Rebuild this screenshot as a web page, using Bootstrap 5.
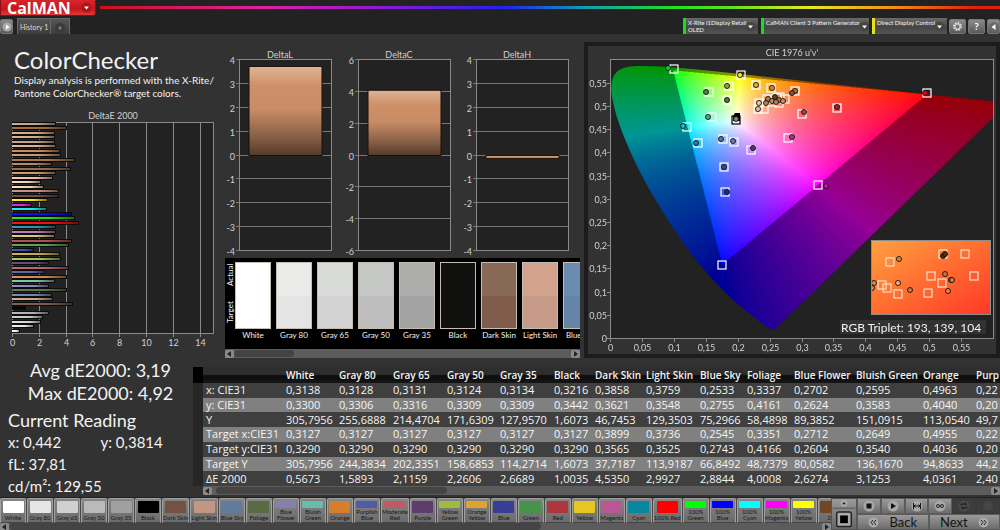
<!DOCTYPE html>
<html lang="en">
<head>
<meta charset="utf-8">
<meta name="viewport" content="width=device-width, initial-scale=1">
<title>CalMAN – ColorChecker</title>
<link rel="stylesheet" href="https://cdn.jsdelivr.net/npm/bootstrap@5.3.0/dist/css/bootstrap.min.css">
<style>
  body { background:#323232; color:#f2f2f2; font-family:Lato,"Open Sans",sans-serif; font-size:10px; line-height:13px; overflow-x:hidden; }
  button { font-family:inherit; }
  .topbar { background:#222; height:17px; }
  .brand-btn { width:96px; height:16px; border:1px solid #8d0d10; border-top:0; border-radius:0 0 3px 0; background:linear-gradient(#d6252b,#c9151c 60%,#e03a3a); color:#fff; font:700 16px/16px "Open Sans",sans-serif; padding:0 3px 0 6px; }
  .rainbow { height:3px; margin-top:6px; background:linear-gradient(90deg,#d0101c 0%,#e020a0 18%,#8a18d8 32%,#2222ee 45%,#10a0b0 54%,#20e020 64%,#60e020 70%,#e8e820 79%,#f09018 88%,#e02010 97%); }
  .tabbar { background:#222; height:17px; }
  .hist-tab { background:linear-gradient(#555,#3d3d3d); border:1px solid #686868; border-bottom:0; color:#ddd; font-size:7px; line-height:14px; padding:0 2px; height:16px; }
  .sq-btn { width:17px; height:15px; padding:0; border:1px solid #777; border-radius:2px; background:linear-gradient(#8b8b8b,#5a5a5a); display:flex; align-items:center; justify-content:center; }
  .sq-btn.narrow { width:13px; }
  .devices { gap:3px; }
  .device { height:16px; padding:0 4px 0 2px; border:0; border-left:3px solid; background:linear-gradient(#6a6a6a,#454545 55%,#555); color:#f2f2f2; font-size:6px; line-height:7px; text-align:left; white-space:nowrap; display:flex; align-items:center; justify-content:space-between; }
  .device span { align-self:start; padding-top:1px; }
  .device svg { flex:none; }
  .dev-green { border-color:#18e018; } .dev-yellow { border-color:#e8e018; }
  .w-dev1 { width:75px; } .w-dev2 { width:108px; } .w-dev3 { width:75px; }
  .tools { gap:2px; margin-left:2px; }
  .upper { display:grid; grid-template-columns:225fr 359fr 416fr; }
  .upper > * { min-width:0; }
  .intro { padding:12px 0 10px 14px; white-space:nowrap; }
  h1 { font-size:24px; line-height:28px; font-weight:400; margin:0; }
  .tick { font:9px Lato,sans-serif; fill:#d0d0d0; }
  svg.fill { display:block; width:100%; height:auto; }
  .mid { padding-right:4px; }
  .strip { background:#000; height:91px; overflow:hidden; }
  .side-lbl { width:10px; writing-mode:vertical-rl; transform:rotate(180deg); font-size:8px; line-height:10px; padding:26px 0 6px; }
  .pairs { gap:5px; }
  .pair { flex:0 0 36px; text-align:center; font-size:8px; line-height:12px; white-space:nowrap; }
  .chip { height:67px; border:1px solid #c4bdb4; }
  .chip div { height:50%; }
  .scroller { height:9px; background:#5c5c5c; display:flex; align-items:center; justify-content:space-between; }
  .scroller.slim { height:7px; }
  .scroller.inset { margin-left:10px; }
  .thumb { height:7px; border-radius:4px; background:#444; margin-right:auto; }
  .arrow { width:9px; height:8px; padding:0; border:0; border-radius:2px; background:#8a8a8a; display:flex; align-items:center; justify-content:center; }
  .cie { border:4px solid #1c1c1c; margin-top:8px; background:#323232; }
  .cie canvas { position:absolute; inset:0; width:100%; height:100%; }
  .lower { display:grid; grid-template-columns:193px minmax(0,1fr); min-height:139px; }
  .big { font-size:18px; line-height:23px; padding-top:1px; }
  .cur { font-size:18px; line-height:30px; }
  .val { font-size:15px; line-height:14px; }
  .val .w-50 { max-width:94px; }
  .grid-wrap { margin-top:9px; overflow:hidden; }
  table.meas { table-layout:fixed; width:832px; height:119px; font:11px/14px "Open Sans",sans-serif; color:#f4f4f4; border-collapse:collapse; }
  .meas th, .meas td { padding:0 0 0 3px; white-space:nowrap; overflow:hidden; font-weight:400; }
  .meas thead th { font-size:10px; font-weight:600; background:linear-gradient(#2e2e2e 0 45%,#0c0c0c 55%,#161616); height:16px; }
  .meas tbody tr:nth-child(odd) { background:#3f3f3f; }
  .meas tbody tr:nth-child(even) { background:#808080; }
  .meas tbody td:first-child { background:#262626; }
  .meas thead th:first-child { background:#000; }
  .bottom { background:#484848; height:33px; border-top:1px solid #222; }
  .patches { overflow:hidden; height:25px; gap:1px; }
  .patch { flex:0 0 26px; height:25px; padding:2px 0 0; border:1px solid #a0a0a0; border-bottom-color:#444; border-radius:2px 2px 0 0; background:linear-gradient(#858585,#6b6b6b); color:#161616; font-size:6px; line-height:6px; white-space:nowrap; display:flex; flex-direction:column; align-items:center; }
  .patch i { width:21px; flex:0 0 12px; border-radius:1px; margin-bottom:2px; }
  .patch.two i { flex-basis:7px; margin-bottom:1px; }
  .stopcol { flex:0 0 25px; background:linear-gradient(#999,#666); border:1px solid #555; }
  .ctl { flex:0 0 143px; }
  .ctl button { border:1px solid #5c5c5c; border-radius:0; background:linear-gradient(#9a9a9a,#6c6c6c); padding:0; color:#151515; display:flex; align-items:center; justify-content:center; flex:1 1 0; }
  .ctl button:disabled { background:#3c3c3c; border-color:#3a3a3a; }
  .modes, .steps { height:16px; }
  .steps button { font-size:13px; line-height:14px; gap:10px; }
</style>
</head>
<body>
<header>
  <div class="topbar d-flex align-items-start">
    <button class="brand-btn d-flex align-items-center justify-content-between" type="button">CalMAN
      <svg width="11" height="11" viewBox="0 0 11 11"><circle cx="5.5" cy="5.5" r="5" fill="#b01218"/><path d="M3 4.5h5L5.5 7.5z" fill="#fff"/></svg></button>
    <div class="rainbow flex-grow-1 ms-1"></div>
  </div>
  <div class="tabbar d-flex align-items-end">
    <button class="sq-btn narrow" type="button" aria-label="Show panel"><svg width="10" height="10" viewBox="0 0 10 10"><circle cx="5" cy="5" r="4.5" fill="#aaa"/><path d="M4 2.5v5L7.5 5z" fill="#fff"/></svg></button>
    <button class="hist-tab flex-shrink-0 ms-1" type="button">History 1</button>
    <button class="hist-tab border-start-0 px-1" type="button" aria-label="New tab"><svg width="10" height="10" viewBox="0 0 10 10"><circle cx="5" cy="5" r="5" fill="#3a3a3a"/><path d="M5 3v4M3 5h4" stroke="#888"/></svg></button>
    <div class="d-flex ms-auto align-items-end devices">
      <button class="device dev-green w-dev1" type="button"><span>X-Rite i1Display Retail<br>OLED</span><svg width="9" height="9" viewBox="0 0 9 9"><circle cx="4.5" cy="4.5" r="4.5" fill="#444"/><path d="M2 3.5h5L4.5 6.5z" fill="#fff"/></svg></button>
      <button class="device dev-green w-dev2" type="button"><span>CalMAN Client 3 Pattern Generator</span><svg width="9" height="9" viewBox="0 0 9 9"><circle cx="4.5" cy="4.5" r="4.5" fill="#444"/><path d="M2 3.5h5L4.5 6.5z" fill="#fff"/></svg></button>
      <button class="device dev-yellow w-dev3" type="button"><span>Direct Display Control</span><svg width="9" height="9" viewBox="0 0 9 9"><circle cx="4.5" cy="4.5" r="4.5" fill="#444"/><path d="M2 3.5h5L4.5 6.5z" fill="#fff"/></svg></button>
    </div>
    <div class="d-flex tools">
      <button class="sq-btn" type="button" aria-label="Settings"><svg width="11" height="11" viewBox="0 0 11 11"><circle cx="5.5" cy="5.5" r="3.5" fill="none" stroke="#ddd" stroke-width="2" stroke-dasharray="1.7 1"/><circle cx="5.5" cy="5.5" r="2.5" fill="none" stroke="#ddd"/></svg></button>
      <button class="sq-btn text-white fw-bold" type="button" aria-label="Help">?</button>
      <button class="sq-btn narrow" type="button" aria-label="Collapse"><svg width="10" height="10" viewBox="0 0 10 10"><circle cx="5" cy="5" r="4.5" fill="#666"/><path d="M6.5 2v6L2.5 5z" fill="#fff"/></svg></button>
    </div>
  </div>
</header>

<main>
  <div class="upper">
    <section>
      <div class="intro">
        <h1>ColorChecker</h1>
        <p class="mb-0">Display analysis is performed with the X-Rite/<br>Pantone ColorChecker® target colors.</p>
      </div>
      <svg class="fill" id="deltaE" viewBox="0 0 225 238" role="img" aria-label="DeltaE 2000"></svg>
    </section>
    <section class="mid">
      <svg class="fill" id="deltas" viewBox="0 0 355 224" role="img" aria-label="DeltaL, DeltaC, DeltaH"></svg>
      <div class="strip d-flex">
        <div class="side-lbl d-flex justify-content-between flex-shrink-0"><span>Target</span><span>Actual</span></div>
        <div class="d-flex pt-1 overflow-hidden pairs" id="pairs"></div>
      </div>
      <div class="scroller"><button class="arrow" type="button" aria-label="Scroll left"><svg width="5" height="6"><path d="M4 0v6L0 3z" fill="#222"/></svg></button><div class="thumb" style="width:17%"></div><button class="arrow" type="button" aria-label="Scroll right"><svg width="5" height="6"><path d="M1 0v6L5 3z" fill="#222"/></svg></button></div>
    </section>
    <section>
      <div class="cie"><div class="position-relative">
        <canvas id="gamut" width="816" height="616"></canvas>
        <svg class="fill position-relative" id="cie" viewBox="0 0 408 308" role="img" aria-label="CIE 1976 u'v'"></svg>
      </div></div>
    </section>
  </div>

  <div class="lower">
    <section class="ps-2">
      <div class="big text-center">Avg dE2000: 3,19<br>Max dE2000: 4,92</div>
      <div class="cur">Current Reading</div>
      <div class="val d-flex"><span class="w-50">x: 0,442</span><span>y: 0,3814</span></div>
      <div class="val mt-2">fL: 37,81</div>
      <div class="val mt-1 pt-1">cd/m²: 129,55</div>
    </section>
    <section class="grid-wrap">
      <table class="meas" id="meas"></table>
      <div class="scroller inset"><button class="arrow" type="button" aria-label="Scroll left"><svg width="5" height="6"><path d="M4 0v6L0 3z" fill="#222"/></svg></button><div class="thumb ms-1" style="width:29%"></div><button class="arrow" type="button" aria-label="Scroll right"><svg width="5" height="6"><path d="M1 0v6L5 3z" fill="#222"/></svg></button></div>
    </section>
  </div>
</main>

<footer class="bottom d-flex">
  <div class="flex-grow-1 overflow-hidden">
    <div class="patches d-flex" id="patches"></div>
    <div class="scroller slim"><button class="arrow" type="button" aria-label="Scroll left"><svg width="5" height="6"><path d="M4 0v6L0 3z" fill="#222"/></svg></button><div class="thumb" style="width:64%"></div><button class="arrow" type="button" aria-label="Scroll right"><svg width="5" height="6"><path d="M1 0v6L5 3z" fill="#222"/></svg></button></div>
  </div>
  <div class="stopcol d-flex flex-column align-items-center">
    <svg width="24" height="31" viewBox="0 0 24 31"><path d="M0 9.5h24" stroke="#555"/><circle cx="12" cy="4.5" r="3.5" fill="#aaa"/><path d="M10 5.5h4L12 3z" fill="#222"/><rect x="4.5" y="13.5" width="15" height="15" rx="2" fill="#aaa" stroke="#222" stroke-width="1.5"/><rect x="8" y="17" width="8" height="8" fill="#000"/></svg>
  </div>
  <div class="ctl">
    <div class="modes d-flex">
      <button type="button" aria-label="Stop"><svg width="12" height="12" viewBox="0 0 12 12"><circle cx="6" cy="6" r="5.5" fill="#a8a8a8"/><rect x="3.5" y="3.5" width="5" height="5" fill="#111"/></svg></button>
      <button type="button" aria-label="Play"><svg width="12" height="12" viewBox="0 0 12 12"><circle cx="6" cy="6" r="5.5" fill="#a8a8a8"/><path d="M4 3v6L9 6z" fill="#111"/></svg></button>
      <button type="button" aria-label="Step"><svg width="12" height="12" viewBox="0 0 12 12"><circle cx="6" cy="6" r="5.5" fill="#a8a8a8"/><path d="M2.5 3v6M9.5 3v6M3 6h6M4.5 4.5L3 6l1.5 1.5M7.5 4.5L9 6 7.5 7.5" stroke="#111" fill="none"/></svg></button>
      <button type="button" aria-label="Loop"><svg width="12" height="12" viewBox="0 0 12 12"><circle cx="6" cy="6" r="5.5" fill="#a8a8a8"/><circle cx="4" cy="6" r="1.5" fill="none" stroke="#222"/><circle cx="8" cy="6" r="1.5" fill="none" stroke="#222"/></svg></button>
      <button type="button" disabled aria-label="Refresh"><svg width="12" height="12" viewBox="0 0 12 12"><circle cx="6" cy="6" r="5.5" fill="#4c4c4c"/><path d="M3 5.5V4h5M7 2.5L8.5 4 7 5.5M9 6.5V8H4M5 6.5L3.5 8 5 9.5" fill="none" stroke="#161616"/></svg></button>
      <button type="button" disabled aria-label="Record"><svg width="12" height="12" viewBox="0 0 12 12"><circle cx="6" cy="6" r="5" fill="#464646"/></svg></button>
    </div>
    <div class="steps d-flex">
      <button type="button"><svg width="11" height="11" viewBox="0 0 11 11"><circle cx="5.5" cy="5.5" r="5" fill="#aaa"/><path d="M5 3L3 5.5 5 8M8 3L6 5.5 8 8" fill="none" stroke="#222"/></svg>Back</button>
      <button type="button">Next<svg width="11" height="11" viewBox="0 0 11 11"><circle cx="5.5" cy="5.5" r="5" fill="#aaa"/><path d="M3 3l2 2.5L3 8M6 3l2 2.5L6 8" fill="none" stroke="#222"/></svg></button>
    </div>
  </div>
</footer>

<script src="https://cdn.jsdelivr.net/npm/bootstrap@5.3.0/dist/js/bootstrap.bundle.min.js"></script>
<script>
const $ = id => document.getElementById(id);
const txt = (x, y, s, a = 'middle') => `<text class="tick" x="${x}" y="${y}" text-anchor="${a}">${s}</text>`;
const line = (x1, y1, x2, y2, c = '#8a8a8a') => `<path d="M${x1} ${y1}L${x2} ${y2}" stroke="${c}"/>`;

/* DeltaE 2000: one bar per patch, top to bottom */
const dE = `3.2 d0aa8c,4 a07048,3.1 d8b088,3.1 d4b494,3.1 c8a888,3.2 e8b898,3.5 c89068,3.6 d89870,4.6 b07848,2.9 b09078,4.3 987050,3.2 d0a070,2.95 f8c8b0,2.1 f8d8c8,2.3 f8e0c0,3.4 c89880,3.4 785040,2.6 f8f020,1.45 e828e8,2.5 20f0f0,4.4 1010e8,4.6 20e820,4.9 ff1010,3.2 3898b0,3.2 c080b8,3.1 e0d078,4.4 b85058,4.2 60a858,1.55 4858b0,3.5 d0b058,3.6 b0c858,2.7 685078,4.15 c06878,2.4 5870b0,4.05 d89050,3.1 80c8b0,2.65 9090c8,4 687858,2.9 7090b8,3 d8a890,4.5 806058,1 080808,2.65 b8b8b8,2.25 d0d0d0,2.1 e0e0e0,1.6 f0f0f0,.55 ffffff`.split(',').map(r => r.split(' '));
let s = '<defs><linearGradient id="sh" x1="0" x2="1"><stop stop-color="#000" stop-opacity="0"/><stop offset=".6" stop-color="#000" stop-opacity=".05"/><stop offset="1" stop-color="#000" stop-opacity=".5"/></linearGradient></defs><rect x="12.5" y="12.5" width="201" height="211" fill="#222" stroke="#8a8a8a"/>' + txt(113, 9, 'DeltaE 2000');
for (let v = 0; v <= 14; v += 2) { const x = Math.round(12 + v * 13.4) + .5; s += line(x, 12, x, 227) + txt(x, 236, v); }
dE.forEach(([v, c], i) => {
  const y = Math.round(13 + i * 4.49), w = Math.round(v * 13.4);
  s += `<rect x="12" y="${y - 1}" width="${w + 1}" height="4" fill="#0c0c0c"/><rect x="12" y="${y}" width="${w}" height="2" fill="#${c}"/><rect x="12" y="${y}" width="${w}" height="2" fill="url(#sh)"/>`;
});
$('deltaE').innerHTML = s;

/* DeltaL, DeltaC, DeltaH */
s = '<defs><linearGradient id="skin" x2="0" y2="1"><stop stop-color="#dcb498"/><stop offset=".22" stop-color="#cf9068"/><stop offset=".48" stop-color="#c98c66"/><stop offset=".8" stop-color="#855e46"/><stop offset="1" stop-color="#543a2b"/></linearGradient></defs>';
[['DeltaL', 14, 4, 1, 3.73], ['DeltaC', 133, 6, 2, 4.1], ['DeltaH', 251, 4, 1, -.12]].forEach(([n, x, m, st, v]) => {
  const k = 95.5 / m, z = 121.5;
  s += `<rect x="${x + .5}" y="26" width="92" height="191" fill="#222"/>` + txt(x + 41, 24, n);
  for (let t = -m; t <= m; t += st) { const y = Math.round(z - t * k) - .5; s += line(x - 3, y, x + 92, y, '#777') + txt(x - 4, y + 4, t, 'end'); }
  s += `<rect x="${x + .5}" y="25.5" width="92" height="191" fill="none" stroke="#8a8a8a"/>`;
  const h = Math.abs(v) * k;
  s += `<rect x="${x + 10}" y="${v > 0 ? z - h : z}" width="73" height="${h}" fill="${v > 0 ? 'url(#skin)' : '#cf9a76'}" stroke="#1a0f08"/>`;
});
$('deltas').innerHTML = s;

/* Actual / target swatches */
$('pairs').innerHTML = [['White', 'ffffff', 'ffffff'], ['Gray 80', 'eaeae8', 'e4e4e4'], ['Gray 65', 'd9dbd9', 'd2d2d2'], ['Gray 50', 'c5c7c5', 'bebebe'], ['Gray 35', 'adaeac', 'a2a2a2'], ['Black', '10100e', '10100e'], ['Dark Skin', '886856', '805c4c'], ['Light Skin', 'd3a28c', 'c69a86'], ['Blue Sky', '6a8cb0', '6484a8']]
  .map(([n, a, b]) => `<div class="pair"><div class="chip"><div style="background:#${a}"></div><div style="background:#${b}"></div></div>${n}</div>`).join('');

/* Chromaticity diagram: plot origin and scale in diagram units */
const OX = 22, OY = 292, KX = 638.5, KY = 463.8;
const locus = [[.1741,.005],[.1714,.0051],[.1644,.0109],[.1566,.0177],[.144,.0297],[.1241,.0578],[.1096,.0868],[.0913,.1327],[.0687,.2007],[.0454,.295],[.0235,.4127],[.0082,.5384],[.0039,.6548],[.0139,.7502],[.0389,.812],[.0743,.8338],[.1142,.8262],[.1547,.8059],[.2296,.7543],[.3016,.6923],[.3731,.6245],[.4441,.5547],[.5125,.4866],[.5752,.4242],[.627,.3725],[.6915,.3083],[.726,.274],[.7347,.2653]];
(() => {
  const cv = $('gamut'), g = cv.getContext('2d'), W = cv.width, H = cv.height;
  const tmp = document.createElement('canvas'); tmp.width = W; tmp.height = H;
  const tg = tmp.getContext('2d'), im = tg.createImageData(W, H);
  const tri = [[.0986, .5777], [.4964, .5256], [.1754, .1581]];
  const side = (a, b, u, v) => (b[0] - a[0]) * (v - a[1]) - (b[1] - a[1]) * (u - a[0]);
  for (let j = 0; j < H; j++) for (let i = 0; i < W; i++) {
    const u = (i / 2 - OX) / KX, v = Math.max((OY - j / 2) / KY, .004);
    const X = 9 * u / (4 * v), Z = (12 - 3 * u - 20 * v) / (4 * v);
    const c = [2.4935 * X - .9314 - .4027 * Z, -.8295 * X + 1.7627 + .0236 * Z, .0358 * X - .0762 + .9569 * Z].map(t => Math.max(t, 0));
    const m = Math.max(...c) || 1;
    const d = [0, 1, 2].map(n => side(tri[n], tri[(n + 1) % 3], u, v));
    const k = d.every(t => t <= 0) ? 255 : 150;
    const p = (j * W + i) * 4;
    for (let n = 0; n < 3; n++) im.data[p + n] = k * Math.pow(c[n] / m, .68);
    im.data[p + 3] = 255;
  }
  tg.putImageData(im, 0, 0);
  g.scale(2, 2);
  g.fillStyle = '#222'; g.fillRect(OX, 13, 384, 279);
  g.beginPath(); g.rect(OX, 13, 384, 279); g.clip();
  const P = locus.map(([x, y]) => { const q = -2 * x + 12 * y + 3; return [OX + 4 * x / q * KX, OY - 9 * y / q * KY]; });
  g.beginPath(); g.moveTo(...P[0]);
  for (let i = 1; i < P.length - 1; i++) g.quadraticCurveTo(...P[i], (P[i][0] + P[i + 1][0]) / 2, (P[i][1] + P[i + 1][1]) / 2);
  g.lineTo(...P[P.length - 1]); g.closePath(); g.clip();
  g.drawImage(tmp, 0, 0, W / 2, H / 2);
})();
s = '<defs><linearGradient id="ins" x2="1" y2="1"><stop stop-color="#ffa040"/><stop offset=".5" stop-color="#ff6c30"/><stop offset="1" stop-color="#ff3828"/></linearGradient><clipPath id="ic"><rect x="284" y="195" width="118" height="74"/></clipPath></defs>';
s += '<rect x="22.5" y="13.5" width="383" height="279" fill="none" stroke="#8a8a8a"/>' + txt(204, 10, "CIE 1976 u'v'");
for (let t = 0; t < 12; t++) {
  const n = String(t * 5 / 100).replace('.', ','), x = Math.round(OX + t * .05 * KX) + .5, y = Math.round(OY - t * .05 * KY) + .5;
  s += line(x, 292, x, 296) + txt(x, 305, n) + line(19, y, 22, y) + txt(19, y + 3, n, 'end');
}
const sq = (x, y, c = '#fff') => `<rect x="${x - 4}" y="${y - 4}" width="8" height="8" fill="none" stroke="${c}" stroke-width="1.2"/>`;
const ci = (x, y, f) => `<circle cx="${x}" cy="${y}" r="2.5" fill="${f}" stroke="#111" stroke-width=".9"/>`;
s += '86 23,153 29,121 46,141 40,139 54,124 71,99 81,110 97,135 93,146 96,163 104,136 121,137 146,200 92,214 68,249 62,339 47,230 139,168 39,183 42,207 45,134 219,171 57,170 63,176 63,179 53,184 56,189 52,192 51,197 53,191 57'.split(',').map(p => sq(...p.split(' ').map(Number))).join('');
s += sq(148, 74, '#000') + '<path d="M147 67h5v8h-7v-5z" fill="#000"/>';
s += '80 22 #00d818,152 29 #ffee00,118 46 #4c8848,139 40 #98a040,139 54 #587830,120 71 #58a888,95 80 #00c8d8,108 97 #2880a8,133 93 #5078b0,145 95 #7878b0,165 102 #503868,136 121 #404898,139 146 #202880,204 91 #a04070,216 66 #a04858,249 61 #902838,337 47 #f00018,238 140 #d800d8,168 39 #e0b830,184 42 #d89030,207 45 #b87038,204 47 #905030,148 73 #888,171 57 #f0c8a0,170 63 #f0c0a0,180 53 #b08050,178 57 #b08060,184 55 #c09060,187 51 #604020,191 54 #a87850,188 56 #b88058,195 55 #d88860'.split(',').map(p => { const [x, y, c] = p.split(' '); return ci(x, y, c); }).join('');
s += '<circle cx="135" cy="233" r="2" fill="#0000d8" stroke="#000080"/>';
s += '<g clip-path="url(#ic)"><rect x="284" y="195" width="118" height="74" fill="url(#ins)"/>' +
  '302 216,294 239,299 242,310 248,340 247,354 237,343 230,355 208,377 208,386 230'.split(',').map(p => sq(...p.split(' ').map(Number), '#ffe0c8')).join('') +
  '311 213 #c09048,286 237 #c89058,284 242 #c89058,310 237 #f0b080,322 244 #d07840,355 210 #503018,357 208 #503018,357 228 #d87038,363 234 #b05838,364 234 #d87840,360 245 #f08048'.split(',').map(p => { const [x, y, c] = p.split(' '); return ci(x, y, c); }).join('') + '</g>';
s += '<rect x="283.5" y="194.5" width="119" height="74" fill="none" stroke="#8c8c8c"/><rect x="252" y="274" width="146" height="14" fill="#323232"/><text x="253" y="286" font-size="12" fill="#f2f2f2">RGB Triplet: 193, 139, 104</text>';
$('cie').innerHTML = s;

/* Measurement table */
const rows = `|White|Gray 80|Gray 65|Gray 50|Gray 35|Black|Dark Skin|Light Skin|Blue Sky|Foliage|Blue Flower|Bluish Green|Orange|Purp
x: CIE31|0,3138|0,3128|0,3131|0,3124|0,3134|0,3216|0,3858|0,3759|0,2533|0,3337|0,2702|0,2595|0,4963|0,22
y: CIE31|0,3300|0,3306|0,3316|0,3309|0,3309|0,3442|0,3621|0,3548|0,2755|0,4161|0,2624|0,3583|0,4040|0,20
Y|305,7956|255,6888|214,4704|171,6309|127,9570|1,6073|46,7453|129,3503|75,2966|58,4898|89,3852|151,0915|113,0540|49,7
Target x:CIE31|0,3127|0,3127|0,3127|0,3127|0,3127|0,3127|0,3899|0,3736|0,2545|0,3351|0,2712|0,2649|0,4955|0,22
Target y:CIE31|0,3290|0,3290|0,3290|0,3290|0,3290|0,3290|0,3565|0,3525|0,2743|0,4166|0,2604|0,3540|0,4036|0,20
Target Y|305,7956|244,3834|202,3351|158,6853|114,2714|1,6073|37,7187|113,9187|66,8492|48,7379|80,0582|136,1670|94,8633|44,2
ΔE 2000|0,5673|1,5893|2,1159|2,2606|2,6689|1,0035|4,5350|2,9927|2,8844|4,0008|2,6274|3,1253|4,0361|2,40`.split('\n').map(r => r.split('|'));
const cols = [10, 80, 53, 54, 54, 53, 54, 41, 51, 54, 47, 47, 62, 67, 53, 52];
$('meas').innerHTML = '<colgroup>' + cols.map(w => `<col style="width:${w}px">`).join('') + '</colgroup><thead><tr><th></th>' +
  rows[0].map(c => `<th scope="col">${c}</th>`).join('') + '</tr></thead><tbody>' +
  rows.slice(1).map(r => '<tr><td></td>' + r.map((c, i) => i ? `<td>${c}</td>` : `<th scope="row">${c}</th>`).join('') + '</tr>').join('') + '</tbody>';

/* Patch buttons */
$('patches').innerHTML = 'White ffffff,Gray 80 e6e6e6,Gray 65 d0d0d0,Gray 50 bababa,Gray 35 a0a0a0,Black 000000,Dark Skin 735244,Light Skin c29682,Blue Sky 627a9d,Foliage 576c43,Blue/Flower 8580b1,Bluish/Green 67bdaa,Orange d67e2c,Purplish/Blue 505ba6,Moderate/Red c15a63,Purple 5e3c6c,Yellow/Green 9dbc40,Orange/Yellow e0a32e,Blue 383d96,Green 469449,Red af363c,Yellow e7c71f,Magenta bb5695,Cyan 0885a1,100% Red ff0000,100%/Green 00ff00,100%/Blue 0000ff,100%/Cyan 00ffff,100%/Magenta ff00ff,100%/Yellow ffff00,2E 704828'.split(',').map(p => {
  const k = p.lastIndexOf(' '), n = p.slice(0, k);
  return `<button type="button" class="patch${n.includes('/') ? ' two' : ''}"><i style="background:#${p.slice(k + 1)}"></i><span>${n.replace('/', '<br>')}</span></button>`;
}).join('');
</script>
</body>
</html>
